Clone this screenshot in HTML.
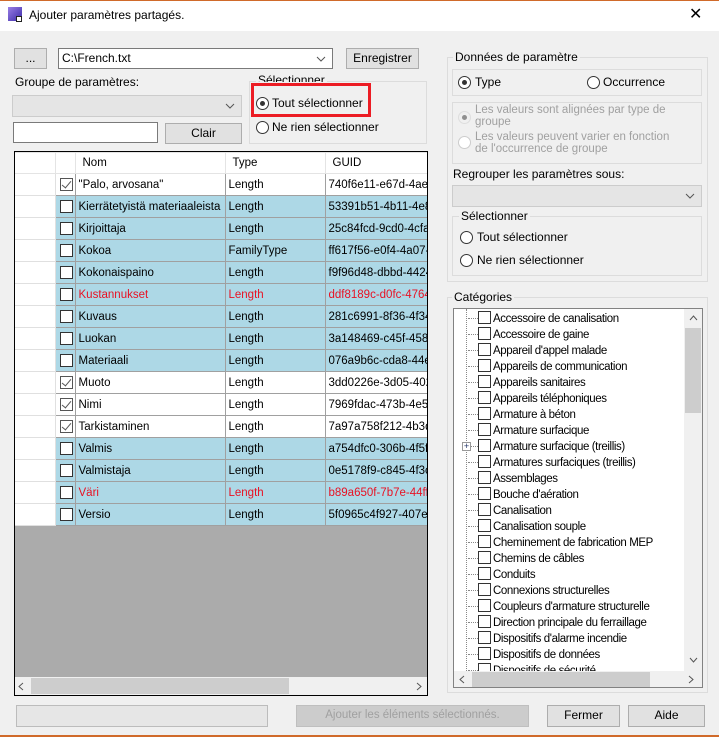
<!DOCTYPE html>
<html><head><meta charset="utf-8"><style>
*{box-sizing:border-box;margin:0;padding:0}
body{width:719px;height:737px;background:#f0f0f0;font-family:"Liberation Sans",sans-serif;font-size:12px;color:#000;position:relative;overflow:hidden}
.a{position:absolute}
.btn{position:absolute;background:#e1e1e1;border:1px solid #adadad;text-align:center;line-height:19px}
.combo{position:absolute;background:#fff;border:1px solid #7a7a7a;line-height:19px;padding-left:3px}
.chev{position:absolute;right:6px;top:7px;width:10px;height:6px}
.grp{position:absolute;border:1px solid #dcdcdc}
.lbl{position:absolute;background:#f0f0f0;padding:0 2px;white-space:nowrap}
.rad{position:absolute;width:13px;height:13px;border:1px solid #333;border-radius:50%;background:#fff}
.rad.on::after{content:"";position:absolute;left:3px;top:3px;width:5px;height:5px;border-radius:50%;background:#333}
.rad.dis{border-color:#ccc;background:#f0f0f0}
.gw{position:absolute;left:15px;top:152px;width:412px;height:525px;overflow:hidden}
table{border-collapse:collapse;table-layout:fixed;width:433px}
td{height:22px;border:1px solid #a0a0a0;white-space:nowrap;overflow:hidden;padding-left:3px;background:#add8e6;font-size:11.5px}
td.rh{background:#fff;border-color:#e0e0e0;border-left:none}
tr.w td{background:#fff}
tr.r td{color:#e81123}
tr.h td{background:#fff;border-color:#e4e4e4;padding-left:7px;height:21px}
.cb{display:inline-block;width:13px;height:13px;border:1px solid #333;background:#fff;vertical-align:middle;margin-left:1px;position:relative}
.cb.on{border-color:#555}
.cb.on::after{content:"";position:absolute;left:3px;top:0px;width:4px;height:8px;border:solid #555;border-width:0 1.5px 1.5px 0;transform:rotate(40deg)}
.ti{position:absolute;left:22px;height:16px;font-size:11.5px;letter-spacing:-0.4px;white-space:nowrap;line-height:15px}
.ti .c{display:inline-block;width:13px;height:13px;border:1px solid #333;background:#fff;vertical-align:-2px;margin-right:2px}
.dots{position:absolute;left:12px;width:10px;border-top:1px dotted #888;top:7px}
</style></head><body>
<div class="a" style="left:0;top:0;width:719px;height:1px;background:#d06a2a"></div>
<div class="a" style="left:0;top:1px;width:719px;height:30px;background:#fff"></div>
<div class="a" style="left:8px;top:7px;width:14px;height:14px;background:linear-gradient(135deg,#9a7fe6,#3b2aa8);"></div>
<div class="a" style="left:16px;top:16px;width:6px;height:6px;border:1px solid #222;background:#fff"></div>
<div class="a" style="left:29px;top:8px;font-size:12px">Ajouter paramètres partagés.</div>
<div class="a" style="left:689px;top:4px;font-size:16px">✕</div>

<div class="btn" style="left:14px;top:48px;width:33px;height:21px">...</div>
<div class="combo" style="left:58px;top:48px;width:275px;height:21px">C:\French.txt<svg class="chev" viewBox="0 0 10 6"><path d="M1 1L5 5L9 1" fill="none" stroke="#555"/></svg></div>
<div class="btn" style="left:346px;top:48px;width:73px;height:21px">Enregistrer</div>

<div class="a" style="left:15px;top:75px">Groupe de paramètres:</div>
<div class="combo" style="left:12px;top:95px;width:230px;height:22px;background:#e5e5e5;border-color:#ccc"><svg class="chev" viewBox="0 0 10 6"><path d="M1 1L5 5L9 1" fill="none" stroke="#555"/></svg></div>
<div class="a" style="left:13px;top:122px;width:145px;height:21px;background:#fff;border:1px solid #7a7a7a"></div>
<div class="btn" style="left:165px;top:123px;width:77px;height:21px">Clair</div>

<div class="grp" style="left:249px;top:81px;width:178px;height:63px"></div>
<div class="lbl" style="left:256px;top:74px;line-height:12px;height:8px;overflow:hidden">Sélectionner</div>
<div class="rad on" style="left:256px;top:97px"></div>
<div class="a" style="left:272px;top:96px">Tout sélectionner</div>
<div class="rad" style="left:256px;top:121px"></div>
<div class="a" style="left:272px;top:120px">Ne rien sélectionner</div>
<div class="a" style="left:251px;top:83px;width:120px;height:34px;border:3px solid #ec1c24"></div>

<div class="a" style="left:14px;top:151px;width:414px;height:545px;border:1px solid #000;background:#ababab"></div>
<div class="gw">
<table>
<colgroup><col style="width:40px"><col style="width:20px"><col style="width:150px"><col style="width:100px"><col style="width:123px"></colgroup>
<tr class="h"><td class="rh"></td><td></td><td>Nom</td><td>Type</td><td>GUID</td></tr>
<tr class="w"><td class="rh"></td><td><span class="cb on"></span></td><td>"Palo, arvosana"</td><td>Length</td><td>740f6e11-e67d-4ae7</td></tr>
<tr><td class="rh"></td><td><span class="cb"></span></td><td>Kierrätetyistä materiaaleista</td><td>Length</td><td>53391b51-4b11-4e8a</td></tr>
<tr><td class="rh"></td><td><span class="cb"></span></td><td>Kirjoittaja</td><td>Length</td><td>25c84fcd-9cd0-4cfa-</td></tr>
<tr><td class="rh"></td><td><span class="cb"></span></td><td>Kokoa</td><td>FamilyType</td><td>ff617f56-e0f4-4a07-a</td></tr>
<tr><td class="rh"></td><td><span class="cb"></span></td><td>Kokonaispaino</td><td>Length</td><td>f9f96d48-dbbd-4424-</td></tr>
<tr class="r"><td class="rh"></td><td><span class="cb"></span></td><td>Kustannukset</td><td>Length</td><td>ddf8189c-d0fc-4764-</td></tr>
<tr><td class="rh"></td><td><span class="cb"></span></td><td>Kuvaus</td><td>Length</td><td>281c6991-8f36-4f34-</td></tr>
<tr><td class="rh"></td><td><span class="cb"></span></td><td>Luokan</td><td>Length</td><td>3a148469-c45f-458a</td></tr>
<tr><td class="rh"></td><td><span class="cb"></span></td><td>Materiaali</td><td>Length</td><td>076a9b6c-cda8-44ea</td></tr>
<tr class="w"><td class="rh"></td><td><span class="cb on"></span></td><td>Muoto</td><td>Length</td><td>3dd0226e-3d05-402a</td></tr>
<tr class="w"><td class="rh"></td><td><span class="cb on"></span></td><td>Nimi</td><td>Length</td><td>7969fdac-473b-4e59</td></tr>
<tr class="w"><td class="rh"></td><td><span class="cb on"></span></td><td>Tarkistaminen</td><td>Length</td><td>7a97a758f212-4b3d</td></tr>
<tr><td class="rh"></td><td><span class="cb"></span></td><td>Valmis</td><td>Length</td><td>a754dfc0-306b-4f5f-b</td></tr>
<tr><td class="rh"></td><td><span class="cb"></span></td><td>Valmistaja</td><td>Length</td><td>0e5178f9-c845-4f3c-</td></tr>
<tr class="r"><td class="rh"></td><td><span class="cb"></span></td><td>Väri</td><td>Length</td><td>b89a650f-7b7e-44ff-8</td></tr>
<tr><td class="rh"></td><td><span class="cb"></span></td><td>Versio</td><td>Length</td><td>5f0965c4f927-407e-</td></tr>
</table>
</div>
<div class="a" style="left:15px;top:677px;width:412px;height:18px;background:#f0f0f0"></div>
<div class="a" style="left:31px;top:678px;width:258px;height:16px;background:#cdcdcd"></div>
<svg class="a" style="left:18px;top:682px" width="6" height="9" viewBox="0 0 6 9"><path d="M5 1L1 4.5L5 8" fill="none" stroke="#555"/></svg>
<svg class="a" style="left:416px;top:682px" width="6" height="9" viewBox="0 0 6 9"><path d="M1 1L5 4.5L1 8" fill="none" stroke="#555"/></svg>

<!-- right -->
<div class="grp" style="left:447px;top:57px;width:261px;height:225px"></div>
<div class="lbl" style="left:453px;top:50px">Données de paramètre</div>
<div class="grp" style="left:452px;top:69px;width:250px;height:27px"></div>
<div class="rad on" style="left:458px;top:76px"></div>
<div class="a" style="left:475px;top:75px">Type</div>
<div class="rad" style="left:587px;top:76px"></div>
<div class="a" style="left:603px;top:75px">Occurrence</div>
<div class="grp" style="left:452px;top:102px;width:250px;height:62px"></div>
<div class="rad dis on" style="left:458px;top:111px;opacity:.5"></div>
<div class="a" style="left:475px;top:104px;color:#a0a0a0;font-size:11.5px;line-height:12px">Les valeurs sont alignées par type de<br>groupe</div>
<div class="rad dis" style="left:458px;top:136px;background:#fff"></div>
<div class="a" style="left:475px;top:131px;color:#a0a0a0;font-size:11.5px;line-height:12px">Les valeurs peuvent varier en fonction<br>de l'occurrence de groupe</div>
<div class="a" style="left:453px;top:167px">Regrouper les paramètres sous:</div>
<div class="combo" style="left:452px;top:185px;width:250px;height:22px;background:#e5e5e5;border-color:#ccc"><svg class="chev" viewBox="0 0 10 6"><path d="M1 1L5 5L9 1" fill="none" stroke="#555"/></svg></div>
<div class="grp" style="left:452px;top:216px;width:250px;height:60px"></div>
<div class="lbl" style="left:459px;top:209px">Sélectionner</div>
<div class="rad" style="left:460px;top:231px"></div>
<div class="a" style="left:477px;top:230px">Tout sélectionner</div>
<div class="rad" style="left:460px;top:254px"></div>
<div class="a" style="left:477px;top:253px">Ne rien sélectionner</div>

<div class="grp" style="left:447px;top:297px;width:261px;height:396px"></div>
<div class="lbl" style="left:452px;top:290px">Catégories</div>
<div class="a" style="left:453px;top:308px;width:250px;height:380px;background:#fff;border:1px solid #828282;overflow:hidden">
<div class="a" style="left:0;top:0;width:230px;height:362px;overflow:hidden">
<div class="a" style="left:12px;top:0;height:362px;border-left:1px dotted #888"></div>
<div class="a" style="left:2px;top:2px">
<div class="a" style="top:0"><span class="dots"></span><span class="ti"><span class="c"></span>Accessoire de canalisation</span></div>
<div class="a" style="top:16px"><span class="dots"></span><span class="ti"><span class="c"></span>Accessoire de gaine</span></div>
<div class="a" style="top:32px"><span class="dots"></span><span class="ti"><span class="c"></span>Appareil d'appel malade</span></div>
<div class="a" style="top:48px"><span class="dots"></span><span class="ti"><span class="c"></span>Appareils de communication</span></div>
<div class="a" style="top:64px"><span class="dots"></span><span class="ti"><span class="c"></span>Appareils sanitaires</span></div>
<div class="a" style="top:80px"><span class="dots"></span><span class="ti"><span class="c"></span>Appareils téléphoniques</span></div>
<div class="a" style="top:96px"><span class="dots"></span><span class="ti"><span class="c"></span>Armature à béton</span></div>
<div class="a" style="top:112px"><span class="dots"></span><span class="ti"><span class="c"></span>Armature surfacique</span></div>
<div class="a" style="top:128px"><span class="dots"></span><span class="a" style="left:6px;top:3px;width:9px;height:9px;border:1px solid #999;background:#fff;font-size:9px;line-height:7px;text-align:center;color:#236">+</span><span class="ti"><span class="c"></span>Armature surfacique (treillis)</span></div>
<div class="a" style="top:144px"><span class="dots"></span><span class="ti"><span class="c"></span>Armatures surfaciques (treillis)</span></div>
<div class="a" style="top:160px"><span class="dots"></span><span class="ti"><span class="c"></span>Assemblages</span></div>
<div class="a" style="top:176px"><span class="dots"></span><span class="ti"><span class="c"></span>Bouche d'aération</span></div>
<div class="a" style="top:192px"><span class="dots"></span><span class="ti"><span class="c"></span>Canalisation</span></div>
<div class="a" style="top:208px"><span class="dots"></span><span class="ti"><span class="c"></span>Canalisation souple</span></div>
<div class="a" style="top:224px"><span class="dots"></span><span class="ti"><span class="c"></span>Cheminement de fabrication MEP</span></div>
<div class="a" style="top:240px"><span class="dots"></span><span class="ti"><span class="c"></span>Chemins de câbles</span></div>
<div class="a" style="top:256px"><span class="dots"></span><span class="ti"><span class="c"></span>Conduits</span></div>
<div class="a" style="top:272px"><span class="dots"></span><span class="ti"><span class="c"></span>Connexions structurelles</span></div>
<div class="a" style="top:288px"><span class="dots"></span><span class="ti"><span class="c"></span>Coupleurs d'armature structurelle</span></div>
<div class="a" style="top:304px"><span class="dots"></span><span class="ti"><span class="c"></span>Direction principale du ferraillage</span></div>
<div class="a" style="top:320px"><span class="dots"></span><span class="ti"><span class="c"></span>Dispositifs d'alarme incendie</span></div>
<div class="a" style="top:336px"><span class="dots"></span><span class="ti"><span class="c"></span>Dispositifs de données</span></div>
<div class="a" style="top:352px"><span class="dots"></span><span class="ti"><span class="c"></span>Dispositifs de sécurité</span></div>
</div></div>
<div class="a" style="left:230px;top:0;width:18px;height:362px;background:#f0f0f0"></div>
<div class="a" style="left:231px;top:19px;width:16px;height:85px;background:#cdcdcd"></div>
<svg class="a" style="left:235px;top:6px" width="9" height="6" viewBox="0 0 9 6"><path d="M1 5L4.5 1L8 5" fill="none" stroke="#555"/></svg>
<svg class="a" style="left:235px;top:348px" width="9" height="6" viewBox="0 0 9 6"><path d="M1 1L4.5 5L8 1" fill="none" stroke="#555"/></svg>
<div class="a" style="left:0;top:362px;width:248px;height:17px;background:#f0f0f0"></div>
<div class="a" style="left:18px;top:363px;width:178px;height:15px;background:#cdcdcd"></div>
<svg class="a" style="left:5px;top:366px" width="6" height="9" viewBox="0 0 6 9"><path d="M5 1L1 4.5L5 8" fill="none" stroke="#555"/></svg>
<svg class="a" style="left:234px;top:366px" width="6" height="9" viewBox="0 0 6 9"><path d="M1 1L5 4.5L1 8" fill="none" stroke="#555"/></svg>
</div>

<div class="a" style="left:16px;top:705px;width:252px;height:22px;background:#e6e6e6;border:1px solid #bcbcbc"></div>
<div class="btn" style="left:296px;top:705px;width:233px;height:22px;background:#ccc;border-color:#bfbfbf;color:#a0a0a0;font-size:11.5px">Ajouter les éléments sélectionnés.</div>
<div class="btn" style="left:547px;top:705px;width:73px;height:22px">Fermer</div>
<div class="btn" style="left:628px;top:705px;width:77px;height:22px">Aide</div>
<div class="a" style="left:0;top:735px;width:719px;height:2px;background:#d06a2a"></div>
</body></html>
